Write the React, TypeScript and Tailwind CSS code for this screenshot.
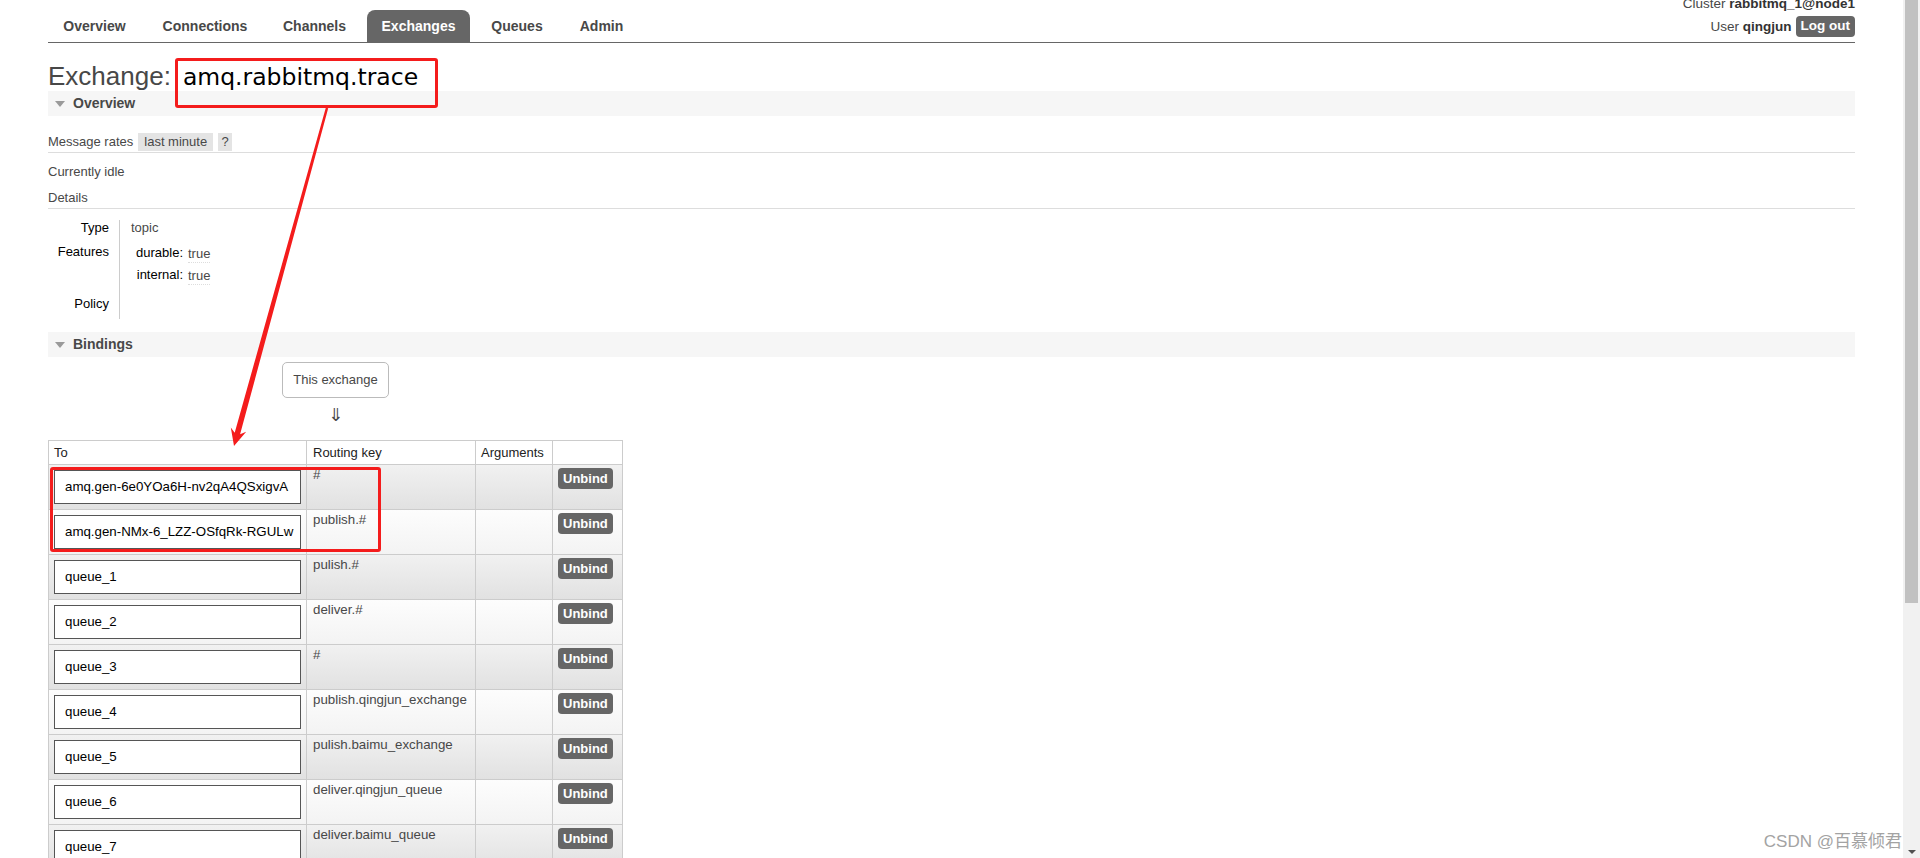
import { FC } from "react";

const tabs = [
    { label: "Overview", w: "w-[95px]" },
    { label: "Connections", w: "w-[114px]" },
    { label: "Channels", w: "w-[93px]" },
    { label: "Exchanges", w: "w-[103px]", active: true },
    { label: "Queues", w: "w-[82px]" },
    { label: "Admin", w: "w-[75px]" },
];

const bindings = [
    { to: "amq.gen-6e0YOa6H-nv2qA4QSxigvA", key: "#" },
    { to: "amq.gen-NMx-6_LZZ-OSfqRk-RGULw", key: "publish.#" },
    { to: "queue_1", key: "pulish.#" },
    { to: "queue_2", key: "deliver.#" },
    { to: "queue_3", key: "#" },
    { to: "queue_4", key: "publish.qingjun_exchange" },
    { to: "queue_5", key: "pulish.baimu_exchange" },
    { to: "queue_6", key: "deliver.qingjun_queue" },
    { to: "queue_7", key: "deliver.baimu_queue" },
];

const SectionBar: FC<{ title: string }> = ({ title }) => (
    <div className="flex h-[25px] items-center bg-[#f6f6f6] pl-[7px]">
        <span className="h-0 w-0 border-x-[5px] border-t-[6px] border-x-transparent border-t-[#9a9a9a]" />
        <span className="ml-[8px] text-[14px] font-bold text-[#484848]">{title}</span>
    </div>
);

const Header = () => (
    <div className="flex h-[43px] items-end justify-between border-b border-[#666]">
        <ul className="-ml-[1px] flex gap-[6px]">
            {tabs.map(t => (
                <li
                    key={t.label}
                    className={`flex h-[32px] items-center justify-center rounded-t-[8px] text-[14px] font-bold ${t.w} ${t.active ? "bg-[#666] text-white" : "text-[#484848]"}`}
                >
                    {t.label}
                </li>
            ))}
        </ul>
        <div className="flex flex-col items-end self-start text-[13.5px]">
            <p className="-mt-[3px] leading-[14px]">
                Cluster <b className="text-[#333]">rabbitmq_1@node1</b>
            </p>
            <div className="mt-[5px] flex items-center gap-[4px]">
                <p className="leading-[16px]">
                    User <b className="text-[#333]">qingjun</b>
                </p>
                <button className="flex h-[21px] items-center rounded-[4px] bg-[#666] px-[5px] font-bold text-white">Log out</button>
            </div>
        </div>
    </div>
);

const Details = () => (
    <div className="mt-[11px] flex leading-[16px]">
        <div className="flex w-[72px] flex-col border-r border-[#ccc] pr-[10px] pb-[7px] text-right text-black">
            <p>Type</p>
            <p className="mt-[8px]">Features</p>
            <p className="mt-[36px]">Policy</p>
        </div>
        <div className="flex flex-col pl-[11px]">
            <p>topic</p>
            <div className="mt-[9px] flex">
                <span className="w-[52px] text-right text-black">durable:</span>
                <span className="ml-[5px] mt-[1px] border-b border-dotted border-[#ddd]">true</span>
            </div>
            <div className="mt-[4px] flex">
                <span className="w-[52px] text-right text-black">internal:</span>
                <span className="ml-[5px] mt-[1px] border-b border-dotted border-[#ddd]">true</span>
            </div>
        </div>
    </div>
);

const BindingsTable = () => (
    <div className="relative mt-[11px] w-[575px] border-l border-t border-[#ccc]">
        <div className="flex h-[24px] items-center bg-white text-[#222]">
            <div className="flex h-full w-[258px] items-center border-r border-b border-[#ccc] pl-[5px]">To</div>
            <div className="flex h-full w-[169px] items-center border-r border-b border-[#ccc] pl-[6px]">Routing key</div>
            <div className="flex h-full w-[77px] items-center border-r border-b border-[#ccc] pl-[5px]">Arguments</div>
            <div className="h-full w-[70px] border-r border-b border-[#ccc]" />
        </div>
        {bindings.map((b, i) => (
            <div
                key={b.to}
                className={`flex h-[45px] bg-gradient-to-b ${i % 2 === 0 ? "from-[#f1f1f1] to-[#e1e1e1]" : "from-[#fdfdfd] to-[#f3f3f3]"}`}
            >
                <div className="w-[258px] border-r border-b border-[#ccc] pl-[5px] pt-[5px]">
                    <div className="flex h-[34px] w-[247px] items-center border border-[#555] bg-white pl-[10px] text-[13.3px] text-black">{b.to}</div>
                </div>
                <div className="w-[169px] border-r border-b border-[#ccc] pl-[6px] pt-[2px] text-[13.3px] leading-[16px]">{b.key}</div>
                <div className="w-[77px] border-r border-b border-[#ccc]" />
                <div className="w-[70px] border-r border-b border-[#ccc] pl-[5px] pt-[3px]">
                    <button className="flex h-[21px] items-center rounded-[4px] bg-[#666] px-[5px] font-bold text-white">Unbind</button>
                </div>
            </div>
        ))}
        <div className="absolute left-[1px] top-[26px] h-[85px] w-[331px] rounded-[3px] border-[3px] border-[#f41c1c]" />
    </div>
);

const Scrollbar = () => (
    <div className="flex h-full w-[17px] shrink-0 flex-col bg-[#f1f1f1]">
        <div className="mx-[2px] h-[603px] bg-[#c1c1c1]" />
        <div className="flex-1" />
        <div className="flex h-[17px] items-end justify-center pb-[4px]">
            <span className="h-0 w-0 border-x-[4px] border-t-[4px] border-x-transparent border-t-[#505050]" />
        </div>
    </div>
);

export default function App() {
    return (
        <div className="flex h-[858px] w-[1920px] overflow-hidden bg-white font-['Liberation_Sans',Arial,sans-serif] text-[13px] text-[#484848]">
            <div className="relative min-w-0 flex-1 px-12">
                <Header />

                <div className="mt-[18px] h-[30px] whitespace-nowrap text-[26px] leading-[30px] text-[#484848]">
                    Exchange:
                    <span className="relative ml-[12px] inline-block font-['DejaVu_Sans',sans-serif] text-[23.5px] leading-[30px] text-black">
                        amq.rabbitmq.trace
                        <span className="absolute -left-[8px] -right-[20px] -top-[4px] -bottom-[16px] rounded-[3px] border-[3px] border-[#f41c1c]" />
                    </span>
                </div>

                <SectionBar title="Overview" />

                <div className="mt-[17px] flex h-[20px] gap-[5px] border-b border-[#ddd] pb-[1px]">
                    <span className="flex items-center">Message rates</span>
                    <span className="flex items-center bg-[#e4e4e4] px-[6px]">last minute</span>
                    <span className="flex w-[14px] items-center justify-center bg-[#e4e4e4]">?</span>
                </div>
                <p className="mt-[11px] leading-[16px]">Currently idle</p>
                <p className="mt-[10px] border-b border-[#ddd] pb-[2px] leading-[16px]">Details</p>

                <Details />

                <div className="mt-[13px]">
                    <SectionBar title="Bindings" />
                </div>

                <div className="flex w-[575px] flex-col items-center">
                    <div className="mt-[5px] flex h-[36px] items-center rounded-[5px] border border-[#bbb] px-[10px]">This exchange</div>
                    <div className="mt-[3px] h-[28px] font-['DejaVu_Sans',sans-serif] text-[18px] leading-[28px]">⇓</div>
                    <BindingsTable />
                </div>

                <svg className="pointer-events-none absolute left-0 top-0" width="400" height="460" viewBox="0 0 400 460">
                    <polygon
                        points="328.2,108.3 240.1,434.2 246.2,431.7 234,446 230.8,427.5 234.7,432.8 325.8,107.7"
                        fill="#f41c1c"
                    />
                </svg>

                <p className="absolute bottom-[6px] right-[1px] font-['Liberation_Sans','Noto_Sans_CJK_SC',sans-serif] text-[17px] leading-[20px] text-[#a3a3a3]">
                    CSDN @百慕倾君
                </p>
            </div>
            <Scrollbar />
        </div>
    );
}
